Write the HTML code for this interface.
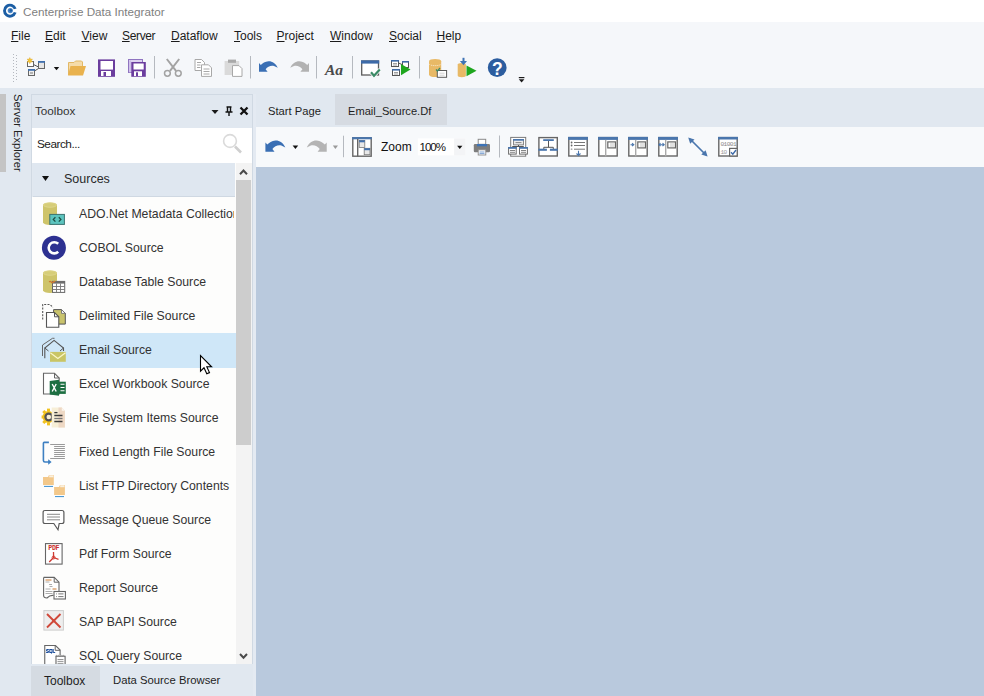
<!DOCTYPE html>
<html><head><meta charset="utf-8">
<style>
*{box-sizing:border-box;margin:0;padding:0}
html,body{width:984px;height:696px;overflow:hidden;background:#e1e8f0;font-family:"Liberation Sans",sans-serif;color:#1e1e1e}
.abs{position:absolute}
#title{left:0;top:0;width:984px;height:22px;background:#ffffff}
#menubar{left:0;top:22px;width:984px;height:28px;background:#f5f7fa}
#toolbar{left:0;top:50px;width:984px;height:38px;background:#f5f7fa}
.t{position:absolute;white-space:nowrap;line-height:1}
.menu{font-size:12px;top:30px;color:#1b1b1b}
.menu u{text-decoration:underline;text-underline-offset:0.5px;text-decoration-thickness:1px}
#sebar{left:0;top:94px;width:6px;height:78px;background:#c4c4c4}
#tbpanel{left:31px;top:94px;width:222px;height:602px;background:#e1e8f0;border-left:1px solid #d0d9e3;border-top:1px solid #d0d9e3;border-right:1px solid #d0d9e3}
#search{left:32px;top:128px;width:220px;height:35px;background:#ffffff}
#srchdr{left:33px;top:163px;width:202px;height:34px;background:#dfe7f0;border-bottom:1px solid #cfd8e2}
#list{left:32px;top:197px;width:204px;height:467px;background:#fdfdfc;overflow:hidden}
.row{position:absolute;left:0;width:204px;height:34px}
.row .lbl{position:absolute;left:47px;top:10px;font-size:12.25px;color:#333;white-space:nowrap;width:155px;overflow:hidden;line-height:15px;top:9.5px}
.row svg{position:absolute;left:10px;top:5px}
#hl{background:#cfe7f8;height:35px}
#sb{left:236px;top:163px;width:16px;height:501px;background:#f3f3f3}
#thumb{left:236px;top:180px;width:15px;height:265px;background:#cdcdcd}
#btabs{left:31px;top:664px;width:222px;height:32px;background:#e1e8f0}
#tabsel{left:31px;top:666px;width:69px;height:30px;background:#d5dbe2}
#docstrip{left:253px;top:94px;width:3px;height:602px;background:#e4eaf2}
#tab1{left:256px;top:94px;width:79px;height:31px;background:#e1e8f0}
#tab2{left:335px;top:94px;width:112px;height:31px;background:#d6dbe2}
#doctb{left:256px;top:127px;width:728px;height:40px;background:#f7f9fb}
#canvas{left:256px;top:167px;width:728px;height:529px;background:#b9c9dd}
.sep{position:absolute;width:1px;background:#b9bcc2}
</style></head><body>
<div class="abs" id="title"></div>
<div class="t" style="left:23px;top:6px;font-size:11.7px;color:#808080">Centerprise Data Integrator</div>
<div class="abs" id="menubar"></div>
<div class="abs" id="toolbar"></div>
<div class="t menu" style="left:11px"><u>F</u>ile</div>
<div class="t menu" style="left:45px"><u>E</u>dit</div>
<div class="t menu" style="left:81.5px"><u>V</u>iew</div>
<div class="t menu" style="left:122px;letter-spacing:-0.35px"><u>S</u>erver</div>
<div class="t menu" style="left:171px"><u>D</u>ataflow</div>
<div class="t menu" style="left:234px"><u>T</u>ools</div>
<div class="t menu" style="left:276.5px"><u>P</u>roject</div>
<div class="t menu" style="left:330px"><u>W</u>indow</div>
<div class="t menu" style="left:389px"><u>S</u>ocial</div>
<div class="t menu" style="left:436.5px"><u>H</u>elp</div>

<div class="abs" id="sebar"></div>
<div class="abs" id="tbpanel"></div>
<div class="t" style="left:35px;top:105px;font-size:11.7px;color:#333">Toolbox</div>
<div class="abs" id="search"></div>
<div class="t" style="left:37px;top:139px;font-size:11.8px;color:#222;letter-spacing:-0.5px">Search...</div>
<div class="abs" id="srchdr"></div>
<div class="abs" style="left:235px;top:163px;width:1px;height:34px;background:#fdfdfc"></div>
<div class="t" style="left:64px;top:173px;font-size:12.5px;color:#2a2a2a">Sources</div>
<div class="abs" id="list">
 <div class="row" style="top:0"><div class="lbl">ADO.Net Metadata Collection Source</div></div>
 <div class="row" style="top:34px"><div class="lbl">COBOL Source</div></div>
 <div class="row" style="top:68px"><div class="lbl">Database Table Source</div></div>
 <div class="row" style="top:102px"><div class="lbl">Delimited File Source</div></div>
 <div class="row" id="hl" style="top:136px"><div class="lbl">Email Source</div></div>
 <div class="row" style="top:170px"><div class="lbl">Excel Workbook Source</div></div>
 <div class="row" style="top:204px"><div class="lbl">File System Items Source</div></div>
 <div class="row" style="top:238px"><div class="lbl">Fixed Length File Source</div></div>
 <div class="row" style="top:272px"><div class="lbl">List FTP Directory Contents</div></div>
 <div class="row" style="top:306px"><div class="lbl">Message Queue Source</div></div>
 <div class="row" style="top:340px"><div class="lbl">Pdf Form Source</div></div>
 <div class="row" style="top:374px"><div class="lbl">Report Source</div></div>
 <div class="row" style="top:408px"><div class="lbl">SAP BAPI Source</div></div>
 <div class="row" style="top:442px"><div class="lbl">SQL Query Source</div></div>
 <svg style="position:absolute;left:0;top:0" width="204" height="467" viewBox="32 197 204 467">
<!-- ADO (origin 42,201) -->
<g transform="translate(42,201)">
<path d="M1,4 A7,2.6 0 0 1 15,4 V21.3 A7,2.6 0 0 1 1,21.3 Z" fill="#cec46a"/>
<ellipse cx="8" cy="4" rx="6.6" ry="2.3" fill="#d6cd78" stroke="#e4dc9a" stroke-width="0.6"/>
<rect x="7.8" y="13.4" width="14.6" height="10" fill="#5cc4be" stroke="#3b7370" stroke-width="1"/>
<path d="M13.4,16.2 L11.3,18.4 L13.4,20.6 M16.8,16.2 L18.9,18.4 L16.8,20.6" fill="none" stroke="#1d4f45" stroke-width="1.3"/>
</g>
<!-- COBOL (origin 42,235) -->
<g transform="translate(42,235)">
<circle cx="11.9" cy="12.8" r="12" fill="#2d3191"/>
<path d="M16.2,8.8 A5.6,5.6 0 1 0 16.2,16.8" fill="none" stroke="#fff" stroke-width="2.6"/>
</g>
<!-- DB table (origin 42,269) -->
<g transform="translate(42,269)">
<path d="M1,4 A7,2.6 0 0 1 15,4 V21.3 A7,2.6 0 0 1 1,21.3 Z" fill="#cec46a"/>
<ellipse cx="8" cy="4" rx="6.6" ry="2.3" fill="#d6cd78" stroke="#e4dc9a" stroke-width="0.6"/>
<rect x="10.5" y="12.4" width="12.2" height="11" fill="#fff" stroke="#666" stroke-width="1"/>
<rect x="10" y="12" width="13" height="2.6" fill="#6d6d6d"/>
<path d="M14.5,14.5 V23 M18.5,14.5 V23 M10.5,17.5 H22.7 M10.5,20.5 H22.7" stroke="#777" stroke-width="0.9"/>
<path d="M7.2,13 q1,-1.2 2,0 t2,0 t2,0" fill="none" stroke="#cf7a2e" stroke-width="1.4"/>
</g>
<!-- Delimited (origin 42,303) -->
<g transform="translate(42,303)">
<path d="M0.7,16.5 V1.5 H8 L11,4.5" fill="none" stroke="#555" stroke-width="1.1" stroke-dasharray="2,1.3"/>
<path d="M11.6,6.6 H19.5 L23.3,10.4 V21.1 H11.6 Z" fill="#c9c36c" stroke="#555" stroke-width="1"/>
<path d="M19.5,6.6 V10.4 H23.3 Z" fill="#fff" stroke="#666" stroke-width="0.8"/>
<path d="M4.5,9.5 H12.5 L16.8,13.8 V24.3 H4.5 Z" fill="#fff" stroke="#555" stroke-width="1.1"/>
<path d="M12.5,9.5 V13.8 H16.8" fill="none" stroke="#555" stroke-width="1"/>
</g>
<!-- Email (origin 42,337) -->
<g transform="translate(42,337)">
<path d="M0.5,19 V8 L10.5,1.3 H12.5" fill="none" stroke="#666" stroke-width="1"/>
<path d="M2.8,21.3 V11 L12.1,3.4 L21.5,11 V14" fill="none" stroke="#555" stroke-width="1.1"/>
<path d="M2.8,11 L6.5,14 M21.5,11 L18,14" fill="none" stroke="#555" stroke-width="1"/>
<rect x="8" y="14.9" width="15.8" height="9.9" fill="#c9c565"/>
<path d="M8.3,15.8 L15.9,21.4 L23.5,15.8" fill="none" stroke="#fbf6c8" stroke-width="1.2"/>
</g>
<!-- Excel (origin 42,371) -->
<g transform="translate(42,371)">
<path d="M1.5,2.3 H12.5 L17.2,7 V23 H1.5 Z" fill="#fff" stroke="#666" stroke-width="1.1"/>
<path d="M12.5,2.3 V7 H17.2" fill="none" stroke="#666" stroke-width="1"/>
<path d="M7.7,10 L17,8.7 V24.8 L7.7,23.4 Z" fill="#1d6f42"/>
<rect x="17" y="10.7" width="6.8" height="12.2" fill="#1d6f42"/>
<path d="M10.2,13 L14.2,20.5 M14.2,13 L10.2,20.5" stroke="#fff" stroke-width="1.4"/>
<path d="M18.5,13.3 h4 M18.5,16.5 h4 M18.5,19.8 h4" stroke="#fff" stroke-width="1.1"/>
</g>
<!-- FSI (origin 42,405) -->
<g transform="translate(42,405)">
<g fill="#f1c21e">
<circle cx="6.5" cy="12" r="6"/>
<rect x="5" y="3.6" width="3" height="3"/><rect x="5" y="17.4" width="3" height="3"/>
<rect x="-0.4" y="10.5" width="3" height="3"/>
<rect x="0.9" y="5.6" width="3" height="3" transform="rotate(45 2.4 7.1)"/>
<rect x="0.9" y="15.4" width="3" height="3" transform="rotate(45 2.4 16.9)"/>
</g>
<circle cx="6.8" cy="12" r="3.4" fill="#f6edd3" stroke="#555" stroke-width="2.2"/>
<path d="M9.7,2.6 H19.8 L22.9,5.7 V22.6 H9.7 Z" fill="#f7efd7"/>
<path d="M16.5,2.6 H19.8 L22.9,5.7 V22.6 H16.5 Z" fill="#eed8c4"/>
<path d="M19.8,2.6 V5.7 H22.9" fill="#fbf6ee"/>
<path d="M12.3,7.6 h3.2" stroke="#3a3a3a" stroke-width="1.3"/>
<path d="M12.3,10.5 h8.2 M12.3,16.5 h8.2" stroke="#3a3a3a" stroke-width="1.3"/>
<path d="M12.3,13.5 h8.2" stroke="#777" stroke-width="1.3"/>
</g>
<!-- Fixed length (origin 42,439) -->
<g transform="translate(42,439)">
<path d="M6.9,3.4 H2.2 Q1.4,3.4 1.4,4.2 V21.5 Q1.4,23 3,23 H7.5" fill="none" stroke="#3e80c2" stroke-width="1.6"/>
<polygon points="6.2,20.2 9.6,23 6.2,25.8" fill="#3e80c2"/>
<path d="M8.2,5.5 h14.7 M12.1,7.5 h10.8 M12.1,9.5 h10.8 M12.1,11.5 h10.8 M12.1,13.5 h10.8 M12.1,15.5 h10.8 M12.1,17.5 h10.8 M8.2,19.5 h14.7" stroke="#8f8f8f" stroke-width="0.9"/>
</g>
<!-- FTP (origin 42,473) -->
<g transform="translate(42,473)">
<path d="M1,4 H6 L7,2 H11.8 V11.9 H1 Z" fill="#f3c88a"/>
<rect x="7.2" y="2.3" width="4.2" height="2" fill="#faf0de"/>
<path d="M2,13.4 h9" stroke="#3b8fcf" stroke-width="1"/>
<path d="M12.1,14 H17 L18,11.9 H22.9 V22.1 H12.1 Z" fill="#f3c88a"/>
<rect x="18.2" y="12.2" width="4.3" height="2" fill="#faf0de"/>
<path d="M13,23.6 h9" stroke="#3b8fcf" stroke-width="1"/>
</g>
<!-- MQ (origin 42,507) -->
<g transform="translate(42,507)">
<path d="M3,3.5 H20 Q21.9,3.5 21.9,5.5 V14.5 Q21.9,16.5 20,16.5 H17.2 L16,22.8 L11.8,16.5 H3 Q1.1,16.5 1.1,14.5 V5.5 Q1.1,3.5 3,3.5 Z" fill="#fff" stroke="#595959" stroke-width="1.2"/>
<path d="M5,7.3 h13 M5,10 h13 M5,12.8 h13" stroke="#7a7a7a" stroke-width="0.9"/>
</g>
<!-- PDF (origin 42,541) -->
<g transform="translate(42,541)">
<rect x="3.5" y="2.6" width="16.6" height="20.5" fill="#fff" stroke="#666" stroke-width="1.1"/>
<text x="11.8" y="9.3" text-anchor="middle" font-family="Liberation Mono" font-weight="bold" font-size="6.6" fill="#c9302c" letter-spacing="-0.3">PDF</text>
<path d="M11.5,11 L11.6,16.5 M11.6,16.5 L7.2,21 M11.6,16.5 L16.5,18.3" stroke="#d03b32" stroke-width="1.3" fill="none"/>
<circle cx="11.6" cy="16.5" r="1.5" fill="none" stroke="#d03b32" stroke-width="0.9"/>
</g>
<!-- Report (origin 42,575) -->
<g transform="translate(42,575)">
<path d="M1.6,2.4 H12.2 L17,7.2 V17 M11.5,20.5 C9,20 7,21 5,23 C3,23 1.6,22 1.6,20.5 V2.4" fill="#fff" stroke="#666" stroke-width="1.1"/>
<path d="M12.2,2.4 V7.2 H17" fill="none" stroke="#666" stroke-width="1"/>
<path d="M3.5,5 h6 M10.5,14 h4" stroke="#cc7b34" stroke-width="1"/>
<path d="M3.5,7 h4 M7,9.5 h3 M7.5,11.5 h3 M3.5,14 h5 M3.5,16.5 h7 M3.5,18.5 h7" stroke="#999" stroke-width="0.8"/>
<rect x="12" y="16.5" width="11.4" height="7.5" fill="#fff" stroke="#666" stroke-width="1.1"/>
<path d="M14,18.9 h0.8 M14,21.6 h0.8 M16.3,18.9 h5.2 M16.3,21.6 h5.2" stroke="#666" stroke-width="0.9"/>
</g>
<!-- SAP (origin 42,609) -->
<g transform="translate(42,609)">
<rect x="1.9" y="1.6" width="19.5" height="19.5" fill="#eeeeee" stroke="#cdcdcd" stroke-width="1"/>
<path d="M5,5 L18.5,18.5 M18.5,5 L5,18.5" stroke="#d0493a" stroke-width="1.9"/>
<circle cx="11.75" cy="11.75" r="1.6" fill="#d0493a"/>
</g>
<!-- SQL (origin 42,643) -->
<g transform="translate(42,643)">
<path d="M2.75,24 V2.5 H13.5 L18.1,7.1 V12" fill="#fff" stroke="#666" stroke-width="1.1"/>
<path d="M13.2,2.5 V7.3 H18.1" fill="none" stroke="#666" stroke-width="1"/>
<g fill="none" stroke="#1d4f9c" stroke-width="1">
<path d="M6.8,6.5 H4.6 V8 H6.4 V9.5 H4.1"/>
<rect x="7.8" y="6.5" width="2.2" height="3"/>
<path d="M9,9.5 L9.5,10.6"/>
<path d="M11.2,6 V9.5 H13.2"/>
</g>
<path d="M14,24 V13.3 H23.1 V24" fill="#fff" stroke="#666" stroke-width="1.1"/>
<path d="M13.6,13.2 l0.9,-0.9 l0.9,0.9 l0.9,-0.9 l0.9,0.9 l0.9,-0.9 l0.9,0.9 l0.9,-0.9 l0.9,0.9 l0.9,-0.9 l0.9,0.9" fill="none" stroke="#777" stroke-width="0.7"/>
<path d="M15.5,16.5 h6 M15.5,18.4 h6 M15.5,20.4 h6" stroke="#8a8a8a" stroke-width="0.9"/>
</g>
</svg>

</div>
<div class="abs" id="sb"></div>
<div class="abs" id="thumb"></div>
<div class="abs" id="btabs"></div>
<div class="abs" id="tabsel"></div>
<div class="t" style="left:44px;top:675px;font-size:12px;color:#1e1e1e">Toolbox</div>
<div class="t" style="left:113px;top:675px;font-size:11.3px;color:#1e1e1e">Data Source Browser</div>

<div class="abs" id="docstrip"></div>
<div class="abs" id="tab1"></div>
<div class="abs" id="tab2"></div>
<div class="t" style="left:268px;top:106px;font-size:11.2px;color:#1e1e1e">Start Page</div>
<div class="t" style="left:348px;top:106px;font-size:11.1px;color:#1e1e1e">Email_Source.Df</div>
<div class="abs" id="doctb"></div>
<div class="abs" id="canvas"></div>
<svg class="abs" style="left:0;top:0" width="984" height="696" viewBox="0 0 984 696">
<!-- title logo -->
<path d="M15.2,8.9 A5.5,5.5 0 1 0 15.2,12.4" fill="none" stroke="#1c5ea4" stroke-width="2.9"/>
<circle cx="10.3" cy="10.6" r="2.6" fill="#4a86c6"/>
<circle cx="10.8" cy="10.4" r="1.3" fill="#1f5fa6"/>
<!-- grip -->
<g fill="#b4b8bf">
<rect x="13" y="54" width="1" height="1"/><rect x="16" y="55" width="1" height="1"/>
<rect x="13" y="57" width="1" height="1"/><rect x="16" y="58" width="1" height="1"/>
<rect x="13" y="60" width="1" height="1"/><rect x="16" y="61" width="1" height="1"/>
<rect x="13" y="63" width="1" height="1"/><rect x="16" y="64" width="1" height="1"/>
<rect x="13" y="66" width="1" height="1"/><rect x="16" y="67" width="1" height="1"/>
<rect x="13" y="69" width="1" height="1"/><rect x="16" y="70" width="1" height="1"/>
<rect x="13" y="72" width="1" height="1"/><rect x="16" y="73" width="1" height="1"/>
<rect x="13" y="75" width="1" height="1"/><rect x="16" y="76" width="1" height="1"/>
<rect x="13" y="78" width="1" height="1"/><rect x="16" y="79" width="1" height="1"/>
<rect x="13" y="81" width="1" height="1"/>
</g>
<!-- new dataflow -->
<g>
<path d="M33.5,64.5 L38.5,67 M38.5,68.5 L34.5,71" stroke="#555" stroke-width="1" fill="none"/>
<rect x="27.5" y="61.5" width="6" height="5" fill="#fff" stroke="#666"/>
<polygon points="29.80,57.60 29.05,59.30 27.20,59.10 28.30,60.60 27.20,62.10 29.05,61.90 29.80,63.60 30.55,61.90 32.40,62.10 31.30,60.60 32.40,59.10 30.55,59.30" fill="#f3c63a" stroke="#e0a826" stroke-width="0.5"/>
<rect x="38.5" y="61.5" width="6" height="7" fill="#e6e6e6" stroke="#666"/>
<rect x="38" y="61" width="7" height="1.8" fill="#3f6fae"/>
<rect x="28.5" y="69.5" width="6" height="6" fill="#f0f0f0" stroke="#666"/>
<rect x="28" y="69" width="7" height="1.8" fill="#3f6fae"/>
<path d="M30,73 h3" stroke="#777"/>
</g>
<polygon points="53.8,67 59.2,67 56.5,70.2" fill="#111"/>
<!-- folder -->
<path d="M68.5,75 V62.5 h5.5 l1.5,-1.5 h6 l1,1 V66.5" fill="#f5dcaa" stroke="#e2b866" stroke-width="1"/>
<polygon points="70.5,66 86,66 83,75.6 68,75.6" fill="#e9b24e"/>
<!-- save -->
<rect x="98" y="59.4" width="17" height="17.4" fill="#6b3d9e"/>
<rect x="100.5" y="61" width="12.5" height="8.6" fill="#fff"/>
<rect x="101" y="71" width="10" height="5" fill="#fff"/>
<rect x="103.5" y="72" width="2.5" height="4" fill="#6b3d9e"/>
<!-- save all -->
<rect x="128.5" y="59.5" width="14" height="13" fill="#ddd2f0" stroke="#8f74c0"/>
<rect x="129.5" y="60.5" width="1.2" height="12" fill="#c8b6e6"/>
<rect x="131.3" y="62" width="14.5" height="14.8" fill="#6b3d9e"/>
<rect x="133.5" y="63.5" width="10.2" height="6" fill="#fff"/>
<rect x="134" y="71.3" width="8" height="4.8" fill="#fff"/>
<rect x="136" y="72.3" width="2" height="3.8" fill="#6b3d9e"/>
<!-- separators -->
<g fill="#b5b9bf">
<rect x="154" y="56" width="1" height="22.5"/>
<rect x="250" y="56" width="1" height="22.5"/>
<rect x="316" y="56" width="1" height="22.5"/>
<rect x="352" y="56" width="1" height="22.5"/>
<rect x="419" y="56" width="1" height="22.5"/>
</g>
<!-- scissors -->
<g stroke="#a3a3a3" fill="none">
<path d="M166.8,59 L176,70.8 M179.2,59 L170,70.8" stroke-width="2"/>
<circle cx="167.4" cy="73.3" r="2.9" stroke-width="1.5"/>
<circle cx="178.3" cy="73.3" r="2.9" stroke-width="1.5"/>
</g>
<!-- copy -->
<g stroke="#a8a8a8" fill="#fff" stroke-width="1">
<path d="M195,59.5 h6.5 l3,3 v8 h-9.5 z"/>
<path d="M197,62.5 h4 M197,65 h3.5 M197,67.5 h3.5" />
<path d="M201.5,64.8 h7 l3,3 v8.6 h-10 z"/>
<path d="M203.5,69 h6 M203.5,71.5 h6 M203.5,74 h6"/>
</g>
<!-- paste -->
<rect x="224.6" y="61" width="14.6" height="14" fill="#dadada"/>
<rect x="228" y="59.6" width="8" height="3.2" fill="#a9a9a9"/>
<path d="M232.5,65.6 h6.5 l3,3 v7.8 h-9.5 z" fill="#fff" stroke="#a8a8a8"/>
<!-- undo -->
<path id="undoP" d="M259,63 L259,71.8 L267.6,71.8 L265.6,69.3 C267.5,66.5 271,65.2 274,66 L277.8,67.8 C276,63.5 272,61 268.5,61.2 C265,61.5 262.5,63.3 260.8,65 Z" fill="#3a6fb4"/>
<path d="M259,63 L259,71.8 L267.6,71.8 L265.6,69.3 C267.5,66.5 271,65.2 274,66 L277.8,67.8 C276,63.5 272,61 268.5,61.2 C265,61.5 262.5,63.3 260.8,65 Z" fill="#b2b2b2" transform="translate(568,0) scale(-1,1)"/>
<!-- Aa -->
<text x="325" y="75" font-family="Liberation Serif" font-weight="bold" font-style="italic" font-size="15.5" fill="#4a4a4a">Aa</text>
<!-- window check -->
<rect x="361.7" y="61" width="16.8" height="14" fill="#fff" stroke="#5c5c5c" stroke-width="1.3"/>
<rect x="361" y="60.4" width="18.2" height="3.2" fill="#3d6aa8"/>
<path d="M371,72.3 L374,75.8 L379.8,69.5" fill="none" stroke="#fff" stroke-width="3.5"/>
<path d="M371,72.3 L374,75.8 L379.8,69.5" fill="none" stroke="#3b8a66" stroke-width="2.2"/>
<!-- flow run -->
<g stroke="#555" fill="#fff" stroke-width="1">
<rect x="391.5" y="60.5" width="7" height="6"/>
<rect x="402.5" y="61.5" width="6" height="6"/>
<rect x="392.5" y="69.5" width="7" height="6"/>
</g>
<g fill="#3d6aa8">
<rect x="391" y="60" width="8" height="1.6"/><rect x="402" y="61" width="7" height="1.6"/><rect x="392" y="69" width="8" height="1.6"/>
</g>
<path d="M393,63.5 h4 M393,65 h4 M394,72.5 h4 M394,74 h4" stroke="#888" stroke-width="0.8"/>
<path d="M398.5,63 L402,64.5" stroke="#555"/>
<polygon points="401,64 410.5,69.5 401,75.2" fill="#1ea61e"/>
<!-- db -->
<path d="M429,61.2 A6,2.2 0 0 1 441.2,61.2 V74.8 A6,2.2 0 0 1 429,74.8 Z" fill="#e8b966"/>
<path d="M429.5,64.4 A5.8,1.6 0 0 0 440.8,64.4" fill="none" stroke="#fff" stroke-width="0.8" stroke-dasharray="1,1"/>
<rect x="437.3" y="70.5" width="9.3" height="6.8" fill="#fff" stroke="#5a5a5a"/>
<path d="M439.5,73.2 h5 M439.5,75.2 h5" stroke="#b5b5b5" stroke-width="0.6"/>
<path d="M436,69.5 L437.5,71 L440,68" fill="none" stroke="#3b8a66" stroke-width="1.2"/>
<!-- db run -->
<path d="M457.7,64.5 A4.1,1.6 0 0 1 465.9,64.5 V75.6 A4.1,1.6 0 0 1 457.7,75.6 Z" fill="#e8b966"/>
<path d="M463.5,57.8 V62" stroke="#3f73b5" stroke-width="2"/>
<polygon points="459.9,61 467,61 463.5,65.2" fill="#3f73b5"/>
<polygon points="466.5,65.5 476.5,70.8 466.5,76.2" fill="#1ea61e"/>
<!-- help -->
<circle cx="497.2" cy="67.7" r="9.4" fill="#2c5d9f"/>
<text x="497.4" y="74.6" text-anchor="middle" font-family="Liberation Sans" font-weight="bold" font-size="17.5" fill="#fff">?</text>
<!-- overflow -->
<rect x="518.8" y="77" width="5.6" height="1.2" fill="#1a1a1a"/>
<polygon points="518.8,79.2 524.4,79.2 521.6,82.6" fill="#1a1a1a"/>
</svg>


<svg class="abs" style="left:0;top:0" width="984" height="696" viewBox="0 0 984 696">
<!-- undo/redo -->
<g transform="translate(265.4,140.6) scale(1.06) translate(-259,-61.3)">
<path d="M259,63 L259,71.8 L267.6,71.8 L265.6,69.3 C267.5,66.5 271,65.2 274,66 L277.8,67.8 C276,63.5 272,61 268.5,61.2 C265,61.5 262.5,63.3 260.8,65 Z" fill="#3a6fb4"/>
</g>
<polygon points="292.6,145.6 298.2,145.6 295.4,148.9" fill="#111"/>
<g transform="translate(306.8,140.6) scale(1.06) translate(-259,-61.3)">
<path d="M259,63 L259,71.8 L267.6,71.8 L265.6,69.3 C267.5,66.5 271,65.2 274,66 L277.8,67.8 C276,63.5 272,61 268.5,61.2 C265,61.5 262.5,63.3 260.8,65 Z" fill="#b4b4b4" transform="translate(536.8,0) scale(-1,1)"/>
</g>
<polygon points="332.8,145.6 338,145.6 335.4,148.9" fill="#9a9a9a"/>
<rect x="343" y="135.7" width="1" height="21.5" fill="#b5b9bf"/>
<rect x="499" y="135.5" width="1" height="22" fill="#b5b9bf"/>
<!-- layout icon -->
<rect x="352.8" y="137.8" width="18.4" height="18.4" fill="#fff" stroke="#666" stroke-width="1.4"/>
<rect x="352.1" y="137.1" width="19.7" height="2.2" fill="#4a76ad"/>
<rect x="357" y="139" width="1.4" height="17.5" fill="#666"/>
<rect x="359.2" y="140.4" width="5.6" height="7" fill="#e8e8e8" stroke="#777" stroke-width="0.8"/>
<rect x="359.2" y="140.3" width="5.6" height="2" fill="#3f6fae"/>
<rect x="364.2" y="148.3" width="5.8" height="6.4" fill="#e8e8e8" stroke="#777" stroke-width="0.8"/>
<rect x="364.2" y="148.2" width="5.8" height="2" fill="#3f6fae"/>
<!-- zoom combo -->
<rect x="417.8" y="138.4" width="47.7" height="17" fill="#fff"/>
<rect x="454.1" y="138.4" width="11.4" height="17" fill="#f3f4f6"/>
<polygon points="457.1,145.8 462.4,145.8 459.75,149" fill="#111"/>
<!-- printer -->
<rect x="478.2" y="139.3" width="7.5" height="5" fill="#fff" stroke="#8a8a8a" stroke-width="1"/>
<rect x="473.8" y="144" width="16.2" height="8.2" rx="1.2" fill="#7d7d7d"/>
<rect x="477" y="144" width="10" height="2.3" fill="#3d73b6"/>
<rect x="478.2" y="149.8" width="7.6" height="5.2" fill="#fff" stroke="#8a8a8a" stroke-width="0.9"/>
<path d="M479.5,152 h5 M479.5,153.6 h5" stroke="#5a8ac6" stroke-width="0.8"/>
<!-- tree icon -->
<rect x="510.7" y="137.4" width="15" height="18.8" fill="#fff" stroke="#7a7a7a" stroke-width="1"/>
<rect x="513.6" y="139.5" width="9.8" height="5.4" fill="#eee" stroke="#777" stroke-width="0.9"/>
<rect x="513.1" y="139" width="10.8" height="1.7" fill="#4a76ad"/>
<path d="M515.5,142.6 h6" stroke="#777" stroke-width="0.9"/>
<path d="M518.5,145 V146.5 M512.4,148 V146.5 H523.5 V148" fill="none" stroke="#555" stroke-width="1"/>
<rect x="508.6" y="147.5" width="7.6" height="6.6" fill="#fff" stroke="#6a6a6a" stroke-width="1"/>
<rect x="508.1" y="147" width="8.6" height="1.8" fill="#4a76ad"/>
<path d="M510,150.5 h5 M510,152.3 h5" stroke="#777" stroke-width="0.9"/>
<rect x="519.5" y="147.5" width="7.9" height="6.6" fill="#fff" stroke="#6a6a6a" stroke-width="1"/>
<rect x="519" y="147" width="8.9" height="1.8" fill="#4a76ad"/>
<path d="M521,150.5 h5 M521,152.3 h5" stroke="#777" stroke-width="0.9"/>
<!-- hierarchy icon -->
<rect x="538.9" y="137.6" width="18.4" height="18.4" fill="#fff" stroke="#666" stroke-width="1.4"/>
<rect x="543.2" y="139.2" width="10.6" height="1.8" fill="#4a76ad"/>
<path d="M548.5,141 V147.3 M543.8,149 V147.3 H553.3 V149" fill="none" stroke="#555" stroke-width="1"/>
<rect x="538.4" y="148.7" width="8.5" height="2.1" fill="#4a76ad"/>
<rect x="549.9" y="148.7" width="7.9" height="2.1" fill="#4a76ad"/>
<!-- list icon -->
<rect x="568.8" y="137.6" width="18.4" height="18.4" fill="#fff" stroke="#666" stroke-width="1.4"/>
<rect x="568.1" y="136.9" width="19.8" height="3" fill="#4a76ad"/>
<path d="M574,142.5 h11 M574,145.5 h11 M574,149.2 h11" stroke="#777" stroke-width="1"/>
<circle cx="571.6" cy="142.5" r="0.9" fill="#666"/><circle cx="571.6" cy="145.5" r="0.9" fill="#666"/><circle cx="571.6" cy="149.2" r="0.9" fill="#aaa"/>
<path d="M578.5,150.8 V155.3 M576.5,153.5 L578.5,155.5 L580.5,153.5" fill="none" stroke="#4a76ad" stroke-width="1.1"/>
<!-- panel icons -->
<g id="pan">
<rect x="598.8" y="137.6" width="18.4" height="18.4" fill="#fff" stroke="#666" stroke-width="1.4"/>
<rect x="598.1" y="136.9" width="19.8" height="3" fill="#4a76ad"/>
<rect x="605" y="139.9" width="1.4" height="16.5" fill="#aaa"/>
<rect x="607.8" y="141.9" width="7.6" height="6" fill="#fff" stroke="#666" stroke-width="1.2"/>
<path d="M610,144 h4 M610,146 h4" stroke="#aaa" stroke-width="0.7"/>
</g>
<rect x="628.8" y="137.6" width="18.4" height="18.4" fill="#fff" stroke="#666" stroke-width="1.4"/>
<rect x="628.1" y="136.9" width="19.8" height="3" fill="#4a76ad"/>
<rect x="635" y="139.9" width="1.4" height="16.5" fill="#aaa"/>
<rect x="637.8" y="141.9" width="7.6" height="6" fill="#fff" stroke="#666" stroke-width="1.2"/>
<path d="M640,144 h4 M640,146 h4" stroke="#aaa" stroke-width="0.7"/>
<path d="M630.5,144.7 h2.5 M632,143.2 L633.8,144.7 L632,146.2" fill="none" stroke="#4a76ad" stroke-width="1.1"/>
<rect x="658.8" y="137.6" width="18.4" height="18.4" fill="#fff" stroke="#666" stroke-width="1.4"/>
<rect x="658.1" y="136.9" width="19.8" height="3" fill="#4a76ad"/>
<rect x="665" y="139.9" width="1.4" height="16.5" fill="#aaa"/>
<rect x="667.8" y="141.9" width="7.6" height="6" fill="#fff" stroke="#666" stroke-width="1.2"/>
<path d="M670,144 h4 M670,146 h4" stroke="#aaa" stroke-width="0.7"/>
<path d="M659,144.7 h5 M660.5,143.2 L659,144.7 L660.5,146.2 M662.5,143.2 L664.2,144.7 L662.5,146.2" fill="none" stroke="#4a76ad" stroke-width="1.1"/>
<!-- line icon -->
<path d="M690,139 L706,155" stroke="#4a76ad" stroke-width="1.7"/>
<polygon points="688.2,137.4 694.5,139.4 690.2,143.7" fill="#4a76ad"/>
<polygon points="707.6,156.6 701.3,154.6 705.6,150.3" fill="#4a76ad"/>
<!-- binary check icon -->
<rect x="718.8" y="137.6" width="18.4" height="18.4" fill="#fff" stroke="#666" stroke-width="1.4"/>
<rect x="718.1" y="136.9" width="19.8" height="2.6" fill="#4a76ad"/>
<text x="720.5" y="146.3" font-family="Liberation Mono" font-size="6.2" fill="#888" letter-spacing="-0.6">01001</text>
<text x="720.5" y="153.5" font-family="Liberation Mono" font-size="6.2" fill="#999" letter-spacing="-0.6">10</text>
<rect x="729.6" y="148.4" width="7.6" height="7.6" fill="#fff" stroke="#666" stroke-width="1.2"/>
<path d="M731,152.3 L732.8,154.2 L736,150" fill="none" stroke="#3d6aa8" stroke-width="1.4"/>
<!-- toolbox header icons -->
<polygon points="211.5,110 218.5,110 215,114" fill="#1a1a1a"/>
<path d="M226.5,107 h5 M227.5,107 v5 M230.5,107 v5 M225.5,112 h7 M229,112 v4" fill="none" stroke="#111" stroke-width="1.4"/>
<path d="M240.5,107.5 L247.5,114.5 M247.5,107.5 L240.5,114.5" stroke="#111" stroke-width="2.3"/>
<!-- search icon -->
<circle cx="230" cy="141" r="6.4" fill="none" stroke="#dadada" stroke-width="1.6"/>
<path d="M235,146.5 L241,152.5" stroke="#cfcfcf" stroke-width="2.6"/>
<!-- sources triangle -->
<polygon points="42,176 49,176 45.5,181" fill="#111"/>
<!-- scroll arrows -->
<path d="M240,174.2 L243.5,170.5 L247,174.2" fill="none" stroke="#4a4a4a" stroke-width="2"/>
<path d="M240,654 L243.5,657.7 L247,654" fill="none" stroke="#4a4a4a" stroke-width="2"/>
<!-- cursor -->
<path d="M200.5,355.5 V371.2 L204,367.8 L206.8,373.8 L209.5,372.6 L206.8,366.8 L211.6,366.8 Z" fill="#fff" stroke="#000" stroke-width="1.1" stroke-linejoin="miter"/>
</svg>

<div class="t" style="left:381px;top:141px;font-size:12px;color:#111">Zoom</div>
<div class="t" style="left:419.5px;top:141.5px;font-size:11.5px;color:#111;letter-spacing:-1px">100%</div>
<div class="t" style="left:12px;top:94px;font-size:11.2px;color:#222;transform-origin:0 0;transform:translate(10.5px,0) rotate(90deg)">Server Explorer</div>
</body></html>
